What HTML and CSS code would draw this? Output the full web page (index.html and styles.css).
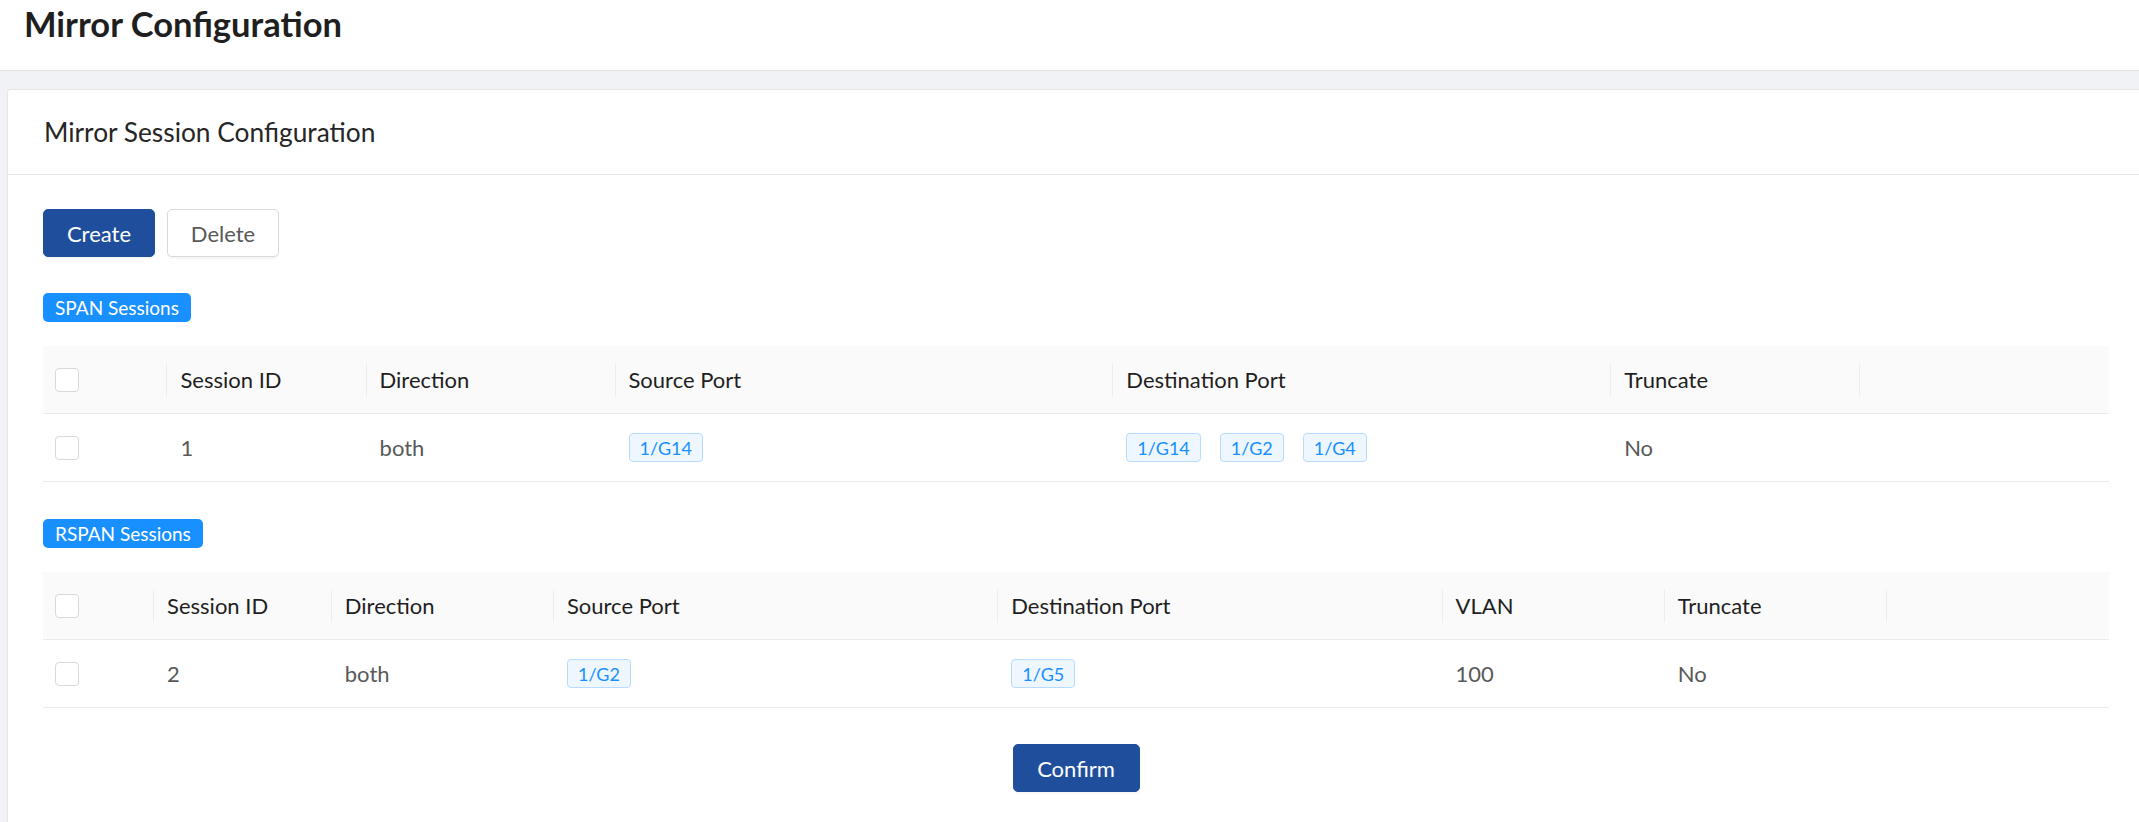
FILE: index.html
```
<!DOCTYPE html>
<html lang="en">
<head>
<meta charset="utf-8">
<title>Mirror Configuration</title>
<link rel="stylesheet" href="styles.css">
</head>
<body>
<header class="topbar">
  <h1 class="page-title">Mirror Configuration</h1>
</header>
<main class="main">
  <section class="card">
    <div class="card-head">Mirror Session Configuration</div>
    <div class="card-body">
      <div class="toolbar">
        <button class="btn btn-primary">Create</button>
        <button class="btn btn-default">Delete</button>
      </div>

      <div class="section-label"><span class="label-tag">SPAN Sessions</span></div>
      <div class="table span-table">
        <div class="tr th-row">
          <div class="th chk-cell"><span class="checkbox"></span></div>
          <div class="th">Session ID</div>
          <div class="th">Direction</div>
          <div class="th">Source Port</div>
          <div class="th">Destination Port</div>
          <div class="th">Truncate</div>
          <div class="th last"></div>
        </div>
        <div class="tr td-row">
          <div class="td chk-cell"><span class="checkbox"></span></div>
          <div class="td">1</div>
          <div class="td">both</div>
          <div class="td"><div class="ports"><span class="port">1/G14</span></div></div>
          <div class="td"><div class="ports"><span class="port">1/G14</span><span class="port">1/G2</span><span class="port">1/G4</span></div></div>
          <div class="td">No</div>
          <div class="td"></div>
        </div>
      </div>

      <div class="section-label"><span class="label-tag">RSPAN Sessions</span></div>
      <div class="table rspan-table">
        <div class="tr th-row">
          <div class="th chk-cell"><span class="checkbox"></span></div>
          <div class="th">Session ID</div>
          <div class="th">Direction</div>
          <div class="th">Source Port</div>
          <div class="th">Destination Port</div>
          <div class="th">VLAN</div>
          <div class="th">Truncate</div>
          <div class="th last"></div>
        </div>
        <div class="tr td-row">
          <div class="td chk-cell"><span class="checkbox"></span></div>
          <div class="td">2</div>
          <div class="td">both</div>
          <div class="td"><div class="ports"><span class="port">1/G2</span></div></div>
          <div class="td"><div class="ports"><span class="port">1/G5</span></div></div>
          <div class="td">100</div>
          <div class="td">No</div>
          <div class="td"></div>
        </div>
      </div>

      <div class="footer">
        <button class="btn btn-primary btn-confirm">Confirm</button>
      </div>
    </div>
  </section>
</main>
</body>
</html>
```
FILE: styles.css
```
* { box-sizing: border-box; }

html, body {
  margin: 0;
  padding: 0;
}

body {
  background: #f0f2f5;
  font-family: "Lato", "Noto Sans", sans-serif;
  color: #262626;
  overflow: hidden;
}

.topbar {
  height: 71px;
  background: #ffffff;
  border-bottom: 1px solid #e3e3e3;
  padding-left: 24px;
}

.page-title {
  margin: 0;
  font-size: 34.5px;
  font-weight: 700;
  line-height: 48px;
  color: #1f1f1f;
}

.main {
  padding: 18px 0 0 7px;
}

.card {
  background: #ffffff;
  border-top: 1px solid #e6e6e6;
  border-left: 1px solid #e6e6e6;
  border-top-left-radius: 3px;
  min-height: 760px;
}

.card-head {
  height: 85px;
  border-bottom: 1px solid #e8e8e8;
  padding-left: 36px;
  display: flex;
  align-items: center;
  font-size: 26.3px;
  color: #262626;
}

.card-body {
  padding: 34px 30px 30px 35px;
}

.toolbar {
  display: flex;
  gap: 12px;
}

.btn {
  height: 48px;
  width: 112px;
  border-radius: 5px;
  font-family: inherit;
  font-size: 22px;
  cursor: pointer;
  padding: 0;
  box-shadow: 0 2px 0 rgba(0, 0, 0, 0.03);
}

.btn-primary {
  background: #1f4f9c;
  border: 1px solid #1f4f9c;
  color: #ffffff;
}

.btn-default {
  background: #ffffff;
  border: 1px solid #d9d9d9;
  color: #595959;
}

.section-label {
  margin-top: 36px;
  display: flex;
}

.table + .section-label {
  margin-top: 37px;
}

.label-tag {
  height: 29px;
  padding: 0 12px;
  border-radius: 5px;
  background: #1890ff;
  color: #ffffff;
  font-size: 19px;
  display: flex;
  align-items: center;
}

.table {
  margin-top: 24px;
}

.tr {
  display: grid;
  height: 68px;
  border-bottom: 1px solid #ebebeb;
}

.span-table .tr {
  grid-template-columns: 0.5fr 0.8fr 1fr 2fr 2fr 1fr 1fr;
}

.rspan-table .tr {
  grid-template-columns: 0.5fr 0.8fr 1fr 2fr 2fr 1fr 1fr 1fr;
}

.th-row {
  background: #fafafa;
}

.th, .td {
  position: relative;
  display: flex;
  align-items: center;
  padding: 0 13px;
  font-size: 22px;
  min-width: 0;
}

.th {
  color: #1f1f1f;
}

.td {
  color: #595959;
}

.th::after {
  content: "";
  position: absolute;
  right: 0;
  top: 50%;
  width: 1px;
  height: 33px;
  transform: translateY(-50%);
  background: #ededed;
}

.th.last::after {
  display: none;
}

.chk-cell {
  padding-left: 12px;
}

.checkbox {
  width: 24px;
  height: 24px;
  border: 1px solid #d9d9d9;
  border-radius: 4px;
  background: #ffffff;
}

.ports {
  display: flex;
  gap: 19px;
}

.port {
  height: 29px;
  padding: 0 10px;
  border: 1px solid #b8dcff;
  border-radius: 4px;
  background: #eef6ff;
  color: #1890ff;
  font-size: 18px;
  display: flex;
  align-items: center;
}

.footer {
  margin-top: 36px;
  display: flex;
  justify-content: center;
}

.btn-confirm {
  width: 127px;
}
```
